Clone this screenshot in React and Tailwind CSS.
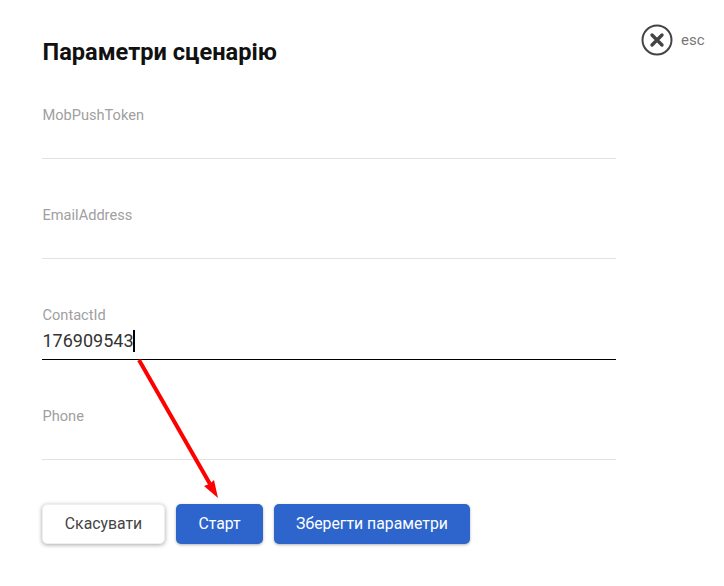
import { useState } from "react";

const fields = [
  { name: "MobPushToken", value: "", height: "h-[58px]" },
  { name: "EmailAddress", value: "", height: "h-[58px]" },
  { name: "ContactId", value: "176909543", active: true, height: "h-[59px]" },
  { name: "Phone", value: "", height: "h-[58px]" },
];

function Field({ name, value, active, height }) {
  return (
    <div className={`w-[574px] border-b ${height} ${active ? "border-black" : "border-[#e2e2e2]"}`}>
      <div className="h-[27px] pl-[0.5px] text-[14.6px] leading-[29px] text-[#a0a0a0]">{name}</div>
      {value && (
        <div className="flex h-[26px] items-center pl-[0.5px] text-[18px] leading-[26px] text-[#333]">
          {value}
          <span className="-ml-[1px] h-[22px] w-[2px] bg-black" />
        </div>
      )}
    </div>
  );
}

export default function App() {
  const [params] = useState(fields);

  return (
    <div className="relative h-[586px] w-[724px] overflow-hidden bg-white font-['Roboto',sans-serif]">
      <div className="absolute left-[641px] top-[24px] flex items-center gap-[8px]">
        <svg width="32" height="32" viewBox="0 0 32 32" fill="none">
          <circle cx="16" cy="16" r="14.5" stroke="#444" strokeWidth="2" />
          <path d="M11 11l10 10M21 11L11 21" stroke="#444" strokeWidth="3.4" strokeLinecap="round" />
        </svg>
        <span className="text-[15px] text-[#777]">esc</span>
      </div>

      <div className="pl-[42px] pt-[37px]">
        <h1 className="pl-[0.5px] text-[23.6px] font-bold leading-[30px] text-[#111]">Параметри сценарію</h1>

        <div className="mt-[34px] flex flex-col gap-[42px]">
          {params.map((f) => (
            <Field key={f.name} {...f} />
          ))}
        </div>

        <div className="mt-[44px] flex gap-[11px] text-[15.8px]">
          <button className="h-[40px] w-[123px] rounded-[5px] border border-[#eee] bg-white text-[#444] shadow-[0_1px_4px_rgba(0,0,0,0.35)]">
            Скасувати
          </button>
          <button className="h-[40px] w-[87px] rounded-[5px] bg-[#2d65cc] text-white shadow-[0_1px_3px_rgba(0,0,0,0.3)]">
            Старт
          </button>
          <button className="h-[40px] w-[196px] rounded-[5px] bg-[#2d65cc] text-white shadow-[0_1px_3px_rgba(0,0,0,0.3)]">
            Зберегти параметри
          </button>
        </div>
      </div>

      <svg className="absolute left-0 top-0" width="724" height="586" fill="none">
        <path d="M139 360L210 484" stroke="#ff0000" strokeWidth="4" />
        <path d="M218 498L204 486L209.5 484L214 480Z" fill="#ff0000" />
      </svg>
    </div>
  );
}
